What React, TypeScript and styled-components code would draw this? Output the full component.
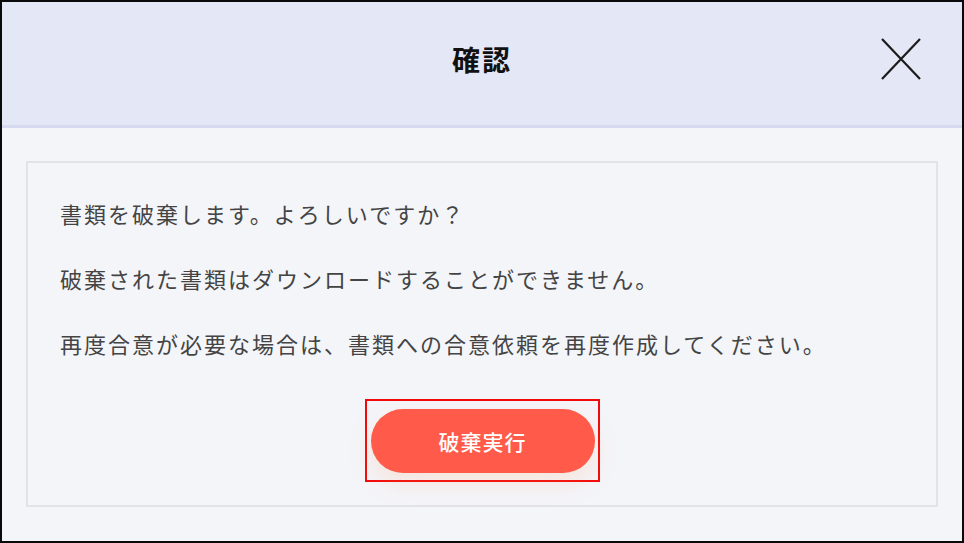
import React from "react";
import styled, { createGlobalStyle } from "styled-components";

const Global = createGlobalStyle`
  html, body { margin: 0; padding: 0; background: #000; }
  body { font-family: "Noto Sans CJK JP", "Noto Sans", sans-serif; }
  * { box-sizing: border-box; }
`;

const Frame = styled.div`
  width: 964px;
  height: 543px;
  border: 2px solid #0a0a0a;
  background: #f4f5f9;
  display: flex;
  flex-direction: column;
  overflow: hidden;
`;

const Header = styled.header`
  height: 126px;
  flex: none;
  background: #e4e7f6;
  border-bottom: 3px solid #d7d9f1;
  display: grid;
  grid-template-columns: 1fr auto 1fr;
  align-items: center;
  padding: 0 41px 10px 41px;
`;

const Title = styled.h1`
  grid-column: 2;
  margin: 0;
  font-size: 28px;
  font-weight: 700;
  letter-spacing: 2px;
  color: #111;
  line-height: 1;
`;

const CloseButton = styled.button`
  grid-column: 3;
  justify-self: end;
  width: 40px;
  height: 42px;
  padding: 0;
  border: none;
  background: transparent;
  cursor: pointer;
  display: flex;
  align-items: center;
  justify-content: center;
`;

const Body = styled.main`
  flex: 1;
  padding: 33px 24px 34px 24px;
  display: flex;
`;

const Panel = styled.section`
  flex: 1;
  border: 2px solid #e2e3e6;
  background: #f4f5f9;
  padding: 34px 32px 23px 32px;
  display: flex;
  flex-direction: column;
`;

const Message = styled.p`
  margin: 0 0 33px 0;
  font-size: 22px;
  line-height: 32px;
  letter-spacing: 2px;
  color: #444;
  &:last-of-type { margin-bottom: 40px; }
`;

const Highlight = styled.div`
  align-self: center;
  border: 2px solid #f20a0a;
  padding: 8px 3px 7px 4px;
`;

const DangerButton = styled.button`
  width: 224px;
  height: 64px;
  border: none;
  border-radius: 32px;
  background: #ff5a4a;
  color: #fff;
  font-family: inherit;
  font-size: 21px;
  font-weight: 500;
  letter-spacing: 1px;
  box-shadow: 0 10px 24px rgba(255, 150, 90, 0.18);
  cursor: pointer;
  display: block;
`;

export default function App() {
  return (
    <>
      <Global />
      <Frame>
        <Header>
          <Title>確認</Title>
          <CloseButton aria-label="閉じる">
            <svg width="40" height="42" viewBox="0 0 40 42">
              <path d="M1 1 L39 41 M39 1 L1 41" stroke="#1c1c1c" strokeWidth="2.2" fill="none" />
            </svg>
          </CloseButton>
        </Header>
        <Body>
          <Panel>
            <Message>書類を破棄します。よろしいですか？</Message>
            <Message>破棄された書類はダウンロードすることができません。</Message>
            <Message>再度合意が必要な場合は、書類への合意依頼を再度作成してください。</Message>
            <Highlight>
              <DangerButton>破棄実行</DangerButton>
            </Highlight>
          </Panel>
        </Body>
      </Frame>
    </>
  );
}
